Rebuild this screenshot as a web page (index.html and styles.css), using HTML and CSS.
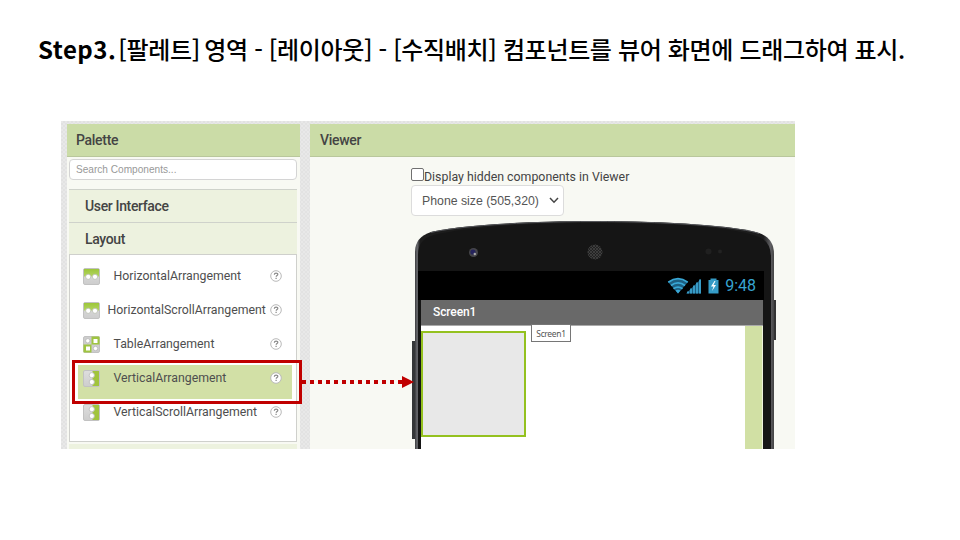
FILE: index.html
```html
<!DOCTYPE html>
<html lang="ko">
<head>
<meta charset="utf-8">
<title>Step3</title>
<link rel="stylesheet" href="styles.css">
</head>
<body>
<svg class="defs" width="0" height="0" aria-hidden="true">
  <defs>
    <linearGradient id="lime" x1="0" y1="0" x2="0" y2="1"><stop offset="0" stop-color="#9cc63a"/><stop offset="1" stop-color="#b3d561"/></linearGradient>
    <linearGradient id="silver" x1="0" y1="0" x2="0" y2="1"><stop offset="0" stop-color="#dedede"/><stop offset="1" stop-color="#cdcdcd"/></linearGradient>
    <symbol id="horizontal" viewBox="0 0 17 17">
      <rect x=".5" y=".5" width="16" height="16" rx="1.5" fill="url(#silver)" stroke="#c2c2c2"/>
      <path d="M1 1h15v7.500H1z" fill="url(#lime)"/>
      <g fill="#fff" stroke="#b9beb0" stroke-width=".8"><circle cx="5.200" cy="8.800" r="2.600"/><circle cx="12" cy="8.800" r="2.600"/></g>
    </symbol>
    <symbol id="vertical" viewBox="0 0 17 17">
      <rect x=".5" y=".5" width="16" height="16" rx="1.500" fill="url(#silver)" stroke="#c2c2c2"/>
      <path d="M9.500 1H16v15H9.500z" fill="#a1c43c"/>
      <g fill="#fff" stroke="#b9b9b9" stroke-width=".8"><circle cx="8.800" cy="5.200" r="2.600"/><circle cx="8.800" cy="12" r="2.600"/></g>
    </symbol>
    <symbol id="table" viewBox="0 0 17 17">
      <rect x=".5" y=".5" width="16" height="16" rx="1.5" fill="#cdcdcd" stroke="#c2c2c2"/>
      <path d="M8.500 .5h8v8h-8zM.5 8.500h8v8h-8z" fill="#9fc540"/>
      <g fill="#fff" stroke="#b5b5b5" stroke-width=".8"><circle cx="4.800" cy="4.800" r="2.200"/><circle cx="12.500" cy="12.500" r="2.200"/></g>
      <path d="M10.500 3h4v4h-4zM3 10.500h4v4H3z" fill="#fff"/>
    </symbol>
    <symbol id="help" viewBox="0 0 12 12">
      <circle cx="6" cy="6" r="5.300" fill="#fff" stroke="#b9b9b9" stroke-width="1"/>
      <path d="M4.300 4.800q.1-1.600 1.800-1.600t1.700 1.300c0 1.100-1.600 1.100-1.600 2.300M6.100 7.800v1.300" fill="none" stroke="#888" stroke-width="1.200"/>
    </symbol>
    <pattern id="mesh" width="3" height="3" patternUnits="userSpaceOnUse"><path d="M0 0l3 3M3 0L0 3" stroke="#4b4b4b" stroke-width=".6"/></pattern>
    <linearGradient id="edge" x1="0" x2="1"><stop offset="0" stop-color="#3a3b3d"/><stop offset=".006" stop-color="#6b6c70"/><stop offset=".014" stop-color="#1c1c1c"/><stop offset=".97" stop-color="#1c1c1c"/><stop offset=".99" stop-color="#606063"/><stop offset="1" stop-color="#444"/></linearGradient>
  </defs>
</svg>

<h1 class="title"><b>Step3.</b><span class="area">[팔레트]</span> 영역 - [레이아웃] - [수직배치] 컴포넌트를 뷰어 화면에 드래그하여 표시.</h1>

<main class="designer">
  <section class="palette">
    <h2 class="panel-head">Palette</h2>
    <div class="search">Search Components...</div>
    <div class="category">User Interface</div>
    <div class="category">Layout</div>
    <ul class="items">
      <li><svg class="icon"><use href="#horizontal"/></svg><span class="name">HorizontalArrangement</span><svg class="help"><use href="#help"/></svg></li>
      <li><svg class="icon"><use href="#horizontal"/></svg><span class="name wide">HorizontalScrollArrangement</span><svg class="help"><use href="#help"/></svg></li>
      <li><svg class="icon"><use href="#table"/></svg><span class="name">TableArrangement</span><svg class="help"><use href="#help"/></svg></li>
      <li class="selected"><svg class="icon"><use href="#vertical"/></svg><span class="name">VerticalArrangement</span><svg class="help"><use href="#help"/></svg></li>
      <li><svg class="icon"><use href="#vertical"/></svg><span class="name">VerticalScrollArrangement</span><svg class="help"><use href="#help"/></svg></li>
    </ul>
    <div class="category next"></div>
  </section>

  <section class="viewer">
    <h2 class="panel-head">Viewer</h2>
    <div class="controls">
      <div class="hidden-toggle"><i class="box"></i><span>Display hidden components in Viewer</span></div>
      <div class="size-select"><span>Phone size (505,320)</span><svg width="10" height="7" viewBox="0 0 10 7"><path d="M1 1l4 4.200L9 1" fill="none" stroke="#444" stroke-width="1.500"/></svg></div>
    </div>
    <div class="phone">
      <svg class="body" width="366" height="229" viewBox="411 220 366 229" aria-hidden="true">
        <path d="M412 341h4v98h-4z" fill="#343637"/>
        <path d="M773 300h3v40h-3z" fill="#333"/>
        <path d="M415 449V252Q415 237 431 232C456 226 520 221 594 221S738 226 759 233Q774 238 774 254V449Z" fill="url(#edge)"/>
        <path d="M431 232.500C456 226.500 520 221.500 594 221.500S738 226.500 759 233.500" fill="none" stroke="#55565a"/>
        <path d="M418 449V255Q418 239 434 235C460 228 520 223 594 223S729 227 753 235Q771 239 771 257V449Z" fill="#151515"/>
        <circle cx="473.500" cy="252.500" r="4.500" fill="#45454a"/><circle cx="473" cy="252" r="2.600" fill="#25235c"/><circle cx="474.800" cy="254" r="1.200" fill="#aaa"/>
        <circle cx="595" cy="252" r="7.500" fill="#222"/><circle cx="595" cy="252" r="7.500" fill="url(#mesh)"/>
        <circle cx="708.500" cy="251.500" r="3" fill="#202020"/><circle cx="720" cy="251.500" r="2" fill="#222"/>
      </svg>
      <div class="status">
        <svg width="52" height="18" viewBox="667 276 52 18" aria-hidden="true">
          <path d="M668 281q10-7 20 0L678 292.500Z" fill="#1d5e80"/>
          <path d="M668.300 281.200q9.700-7 19.400 0M671 284.500q7-5.200 14 0M673.500 287.700q4.500-3.300 9 0" fill="none" stroke="#39a7d5" stroke-width="1.800"/>
          <path d="M675.500 289.500q2.500-1.500 5 0L678 292.500Z" fill="#39a7d5"/>
          <path d="M686 292.500L701 278V292.500Z" fill="#1d5e80"/>
          <path d="M688 292.500v-2M691 292.500v-5M694 292.500v-8M697 292.500v-11M700 292.500v-14" stroke="#3da6d2" stroke-width="1.700"/>
          <path d="M708.500 279h2v-1.500h6v1.500h2V292.500h-10Z" fill="#359bc6"/>
          <path d="M714.500 280l-3.500 5.500h2.500L712 290l4-6h-2.500l2-4Z" fill="#fff"/>
        </svg>
        <span>9:48</span>
      </div>
      <div class="screen-title">Screen1</div>
      <div class="screen"><div class="dropped"></div><div class="scroll-zone"></div></div>
      <div class="tooltip">Screen1</div>
    </div>
  </section>
</main>

<div class="callout"></div>
<svg class="arrow" width="114" height="14" viewBox="300 375 114 14" aria-hidden="true"><path d="M301 382H403" stroke="#c00000" stroke-width="4" stroke-dasharray="4 4" stroke-dashoffset="-1"/><path d="M402 376L414 382L402 388Z" fill="#c00000"/></svg>
</body>
</html>
```
FILE: styles.css
```css
* { box-sizing: border-box; }
body { margin: 0; width: 960px; height: 540px; overflow: hidden; background: #fff; position: relative; font-family: Roboto, "Liberation Sans", sans-serif; color: #444; }
.defs { position: absolute; }
.title { height: 121px; margin: 0; padding: 31px 0 0 38px; font: 500 24px/36px "Noto Sans CJK KR", sans-serif; color: #000; white-space: nowrap; letter-spacing: -.34px; }
.title b { font-weight: 700; letter-spacing: .5px; margin-right: 2px; }
.area { margin-right: -2px; }
.designer { width: 734px; height: 328px; margin-left: 61px; padding: 3px 0 0 6px; display: flex; gap: 10px; overflow: hidden; background: repeating-conic-gradient(#e2e2e2 0 25%, #e8e8e8 0 50%) 0 0 / 4px 4px; }
.palette { width: 233px; background: #f8f9f3; }
.panel-head { margin: 0; height: 33px; padding-left: 9px; font-size: 14px; letter-spacing: -.3px; line-height: 33px; font-weight: 500; background: #cbdca7; border-bottom: 1px solid #b9c79c; }
.viewer .panel-head { padding-left: 10px; }
.search { margin: 2px 3px 9px 2px; height: 21px; border: 1px solid #d4d4d4; border-radius: 4px; padding-left: 6px; font: 10.100px/19px "Liberation Sans", sans-serif; color: #999; background: #fff; }
.category { margin: 0 3px 0 2px; height: 32.500px; border-top: 1px solid #cfd2cb; padding-left: 16px; background: #edf2df; font-size: 14px; letter-spacing: -.35px; line-height: 32px; font-weight: 500; }
.items { margin: 0 3px 2px 2px; padding: 8px 4px 0 8px; height: 188px; list-style: none; background: #fff; border: 1px solid #cfd0cc; }
.items li { height: 34px; display: flex; align-items: flex-start; padding: 5px 10.500px 0 5px; }
.icon { width: 17px; height: 17px; flex: none; }
.name { flex: 1; min-width: 0; margin-left: 13.500px; font-size: 12.300px; line-height: 16px; white-space: nowrap; color: #4e4e4e; }
.name.wide { margin-left: 7.500px; }
.help { width: 12px; height: 12px; margin-top: 2px; flex: none; }
.selected { background: #d2e0a6; }
.next { border: 0; }
.viewer { flex: 1; background: #f8f9f3; }
.controls { margin-left: 101px; padding-top: 11px; }
.hidden-toggle { display: flex; height: 17px; font-size: 12.350px; line-height: 19px; white-space: nowrap; color: #444; }
.box { width: 13px; height: 13px; border: 1px solid #707070; border-radius: 2px; background: #fff; }
.size-select { width: 153px; height: 31px; display: flex; align-items: center; justify-content: space-between; padding: 0 4px 0 10px; border: 1px solid #dcdcdc; border-radius: 4px; background: #fff; font: 12.300px/16px "Liberation Sans", sans-serif; color: #555; }
.phone { position: relative; width: 366px; height: 229px; margin: 4px 0 0 101px; padding: 51px 13px 0 7px; }
.body { position: absolute; left: 0; top: 0; }
.status { position: relative; height: 29px; background: #000; display: flex; justify-content: flex-end; align-items: center; gap: 6px; padding-right: 8px; color: #37a4d1; font: 16px/28px Roboto, sans-serif; }
.screen-title { position: relative; margin: 0 1px 0 3px; height: 26px; padding-left: 12px; border-bottom: 1px solid #aaa; background: #696969; color: #fff; font-size: 12px; line-height: 24px; font-weight: 500; letter-spacing: -.1px; }
.screen { position: relative; height: 123px; margin: 0 1px 0 3px; display: flex; justify-content: space-between; background: #fff; }
.dropped { width: 105px; height: 106px; margin-top: 5px; background: #e8e8e8; border: 2px solid #94c11f; }
.scroll-zone { width: 18px; background: #d1e0a4; border-right: 1px solid #eef3dd; }
.tooltip { position: absolute; left: 120px; top: 104px; width: 40px; height: 18px; border: 1px solid #767676; background: #fff; font: 8.500px/17px "Noto Sans", sans-serif; letter-spacing: -.35px; text-align: center; color: #555; }
.callout { position: absolute; left: 72px; top: 360px; width: 230px; height: 44px; border: 3px solid #c00000; }
.arrow { position: absolute; left: 300px; top: 375px; }
```
